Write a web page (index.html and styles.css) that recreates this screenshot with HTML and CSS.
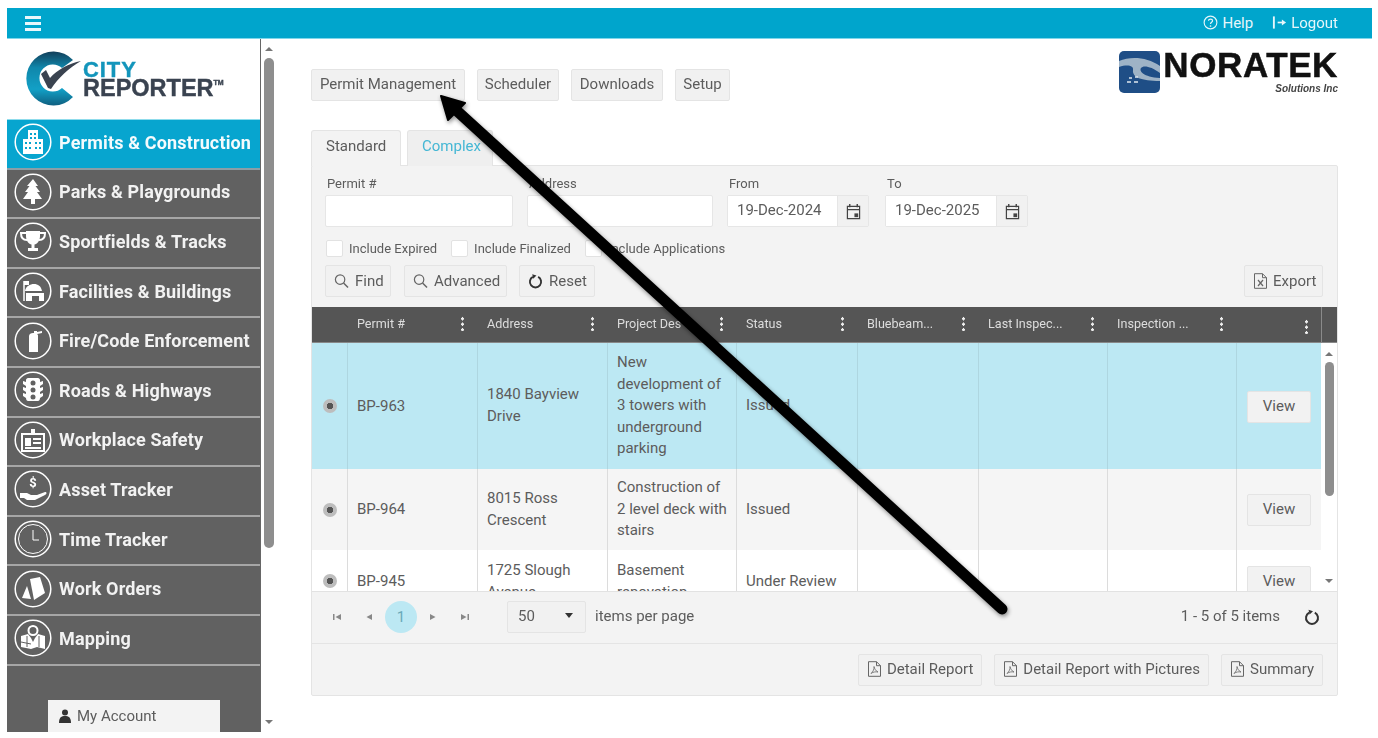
FILE: index.html
```html
<!DOCTYPE html>
<html lang="en">
<head>
<meta charset="utf-8">
<title>City Reporter - Permit Management</title>
<link rel="stylesheet" href="styles.css">
</head>
<body>
<svg class="defs" width="0" height="0" aria-hidden="true">
  <defs>
    <linearGradient id="g-c" x1="0" y1="0" x2="0" y2="1"><stop offset="0" stop-color="#123f5a"/><stop offset=".3" stop-color="#1087ab"/><stop offset=".7" stop-color="#12a0c6"/><stop offset="1" stop-color="#0f5f80"/></linearGradient>
  </defs>
  <symbol id="i-search" viewBox="0 0 16 16"><circle cx="6.500" cy="6.500" r="5" fill="none" stroke="currentColor" stroke-width="1.300"/><path d="M10.200 10.200 15 15" stroke="currentColor" stroke-width="1.600" fill="none"/></symbol>
  <symbol id="i-refresh" viewBox="0 0 16 16"><path d="M5.200 3.600A6 6 0 1 0 10.800 3.600" fill="none" stroke="currentColor" stroke-width="2"/><path d="M4.500 .8 9 2.200 5.600 5.600Z" fill="currentColor"/></symbol>
  <symbol id="i-cal" viewBox="0 0 16 18"><path d="M1.500 3.500h13v13h-13zM1.500 7h13" fill="none" stroke="currentColor" stroke-width="1.300"/><path d="M4 1v3.500M12 1v3.500" stroke="currentColor" stroke-width="1.500"/><rect x="9" y="11" width="4" height="4" fill="currentColor"/></symbol>
  <symbol id="i-pdf" viewBox="0 0 14 16"><path d="M1 .7h8l4 4v10.600H1zM9 .7v4h4" fill="none" stroke="currentColor" stroke-width="1"/><path d="M3.500 12.500C5.500 11 7 7.500 6.500 5.500 7 8 8.500 10 10.500 11 8 10.500 5.500 11 3.500 12.500Z" fill="none" stroke="currentColor" stroke-width=".8"/></symbol>
  <symbol id="i-xls" viewBox="0 0 14 16"><path d="M1 .7h8l4 4v10.600H1zM9 .7v4h4" fill="none" stroke="currentColor" stroke-width="1"/><path d="M4.500 7 9.500 13M9.500 7 4.500 13" stroke="currentColor" stroke-width="1.200"/></symbol>
  <symbol id="i-ring" viewBox="0 0 38 38"><circle cx="19" cy="19" r="17.800" fill="none" stroke="#fff" stroke-width="1.500"/></symbol>
</svg>

<div class="app">
  <header class="topbar">
    <div class="burger"><span></span><span></span><span></span></div>
    <nav class="top-links">
      <a class="top-link"><svg class="top-ic" viewBox="0 0 16 16"><circle cx="8" cy="8" r="6.800" fill="none" stroke="currentColor" stroke-width="1.200"/><path d="M5.800 6.200C6 3.800 10.200 3.800 10.200 6.200 10.200 7.800 8 7.800 8 9.600" fill="none" stroke="currentColor" stroke-width="1.300"/><circle cx="8" cy="11.700" r=".9" fill="currentColor"/></svg>Help</a>
      <a class="top-link"><svg class="top-ic" viewBox="0 0 16 16"><path d="M2 1.500v13" stroke="currentColor" stroke-width="2"/><path d="M6 8h6" stroke="currentColor" stroke-width="1.800"/><path d="M10.500 4.800 15 8l-4.500 3.200Z" fill="currentColor"/></svg>Logout</a>
    </nav>
  </header>

  <div class="main">
    <aside class="sidebar">
      <div class="brand">
        <svg class="brand-mark" viewBox="0 0 60 56">
          <path d="M50 9A27 27 0 1 0 50 46L39 37A13.500 13.500 0 1 1 39 17Z" fill="url(#g-c)"/>
          <path d="M18 23 23 19 27 27C34 19 46 12 58 10 46 17 35 27 28 38L25 37Z" fill="#3a4350"/>
        </svg>
        <div class="brand-text">
          <span class="brand-city">CITY</span>
          <span class="brand-rep">REPORTER<sup class="tm">TM</sup></span>
        </div>
      </div>
      <ul class="menu">
        <li class="menu-item is-active"><svg class="ic"><use href="#i-ring"/><path d="M14 7h10v9h5v15H9V16h5Z" fill="#fff"/><path d="M11 19h2v2h-2zM15 19h2v2h-2zM21 19h2v2h-2zM25 19h2v2h-2zM11 24h2v2h-2zM15 24h2v2h-2zM21 24h2v2h-2zM25 24h2v2h-2zM16 10h2v2h-2zM20 10h2v2h-2zM16 14h2v2h-2zM20 14h2v2h-2z" fill="#07a5cf"/></svg>Permits &amp; Construction</li>
        <li class="menu-item"><svg class="ic"><use href="#i-ring"/><path d="M19 6l5 7h-2.500l4.500 6h-3l5 7H21v5h-4v-5H9l5-7h-3l4.500-6H13Z" fill="#fff"/></svg>Parks &amp; Playgrounds</li>
        <li class="menu-item"><svg class="ic"><use href="#i-ring"/><path d="M12 9h14v5c0 5-3 8-5.500 8.500V26H24v3H14v-3h3.500v-3.500C15 22 12 19 12 14Z" fill="#fff"/><path d="M12 11H7c0 5 2 7 6 7M26 11h5c0 5-2 7-6 7" fill="none" stroke="#fff" stroke-width="2"/></svg>Sportfields &amp; Tracks</li>
        <li class="menu-item"><svg class="ic"><use href="#i-ring"/><path d="M10 9V29" stroke="#fff" stroke-width="1.500"/><path d="M10 9h5v4h-5zM11 19c1-5 5-7 9-7s7 2 8 7ZM12 21h18v8h-5v-5h-7v5h-6Z" fill="#fff"/></svg>Facilities &amp; Buildings</li>
        <li class="menu-item"><svg class="ic"><use href="#i-ring"/><path d="M15 14c0-2 2-3 4-3h1v-2h3v1l5-1v2l-5 1c1 1 1 1 1 2v16h-9Z" fill="#fff"/></svg>Fire/Code Enforcement</li>
        <li class="menu-item"><svg class="ic"><use href="#i-ring"/><path d="M14 7h10c1 0 2 1 2 2v2l3-1v3l-3 2v2l3-1v3l-3 2v2l3-1v3l-3 2c0 2-1 3-2 3H14c-1 0-2-1-2-3l-3-2v-3l3 1v-2l-3-2v-3l3 1v-2l-3-2v-3l3 1V9c0-1 1-2 2-2Z" fill="#fff"/><circle cx="19" cy="12" r="2.500" fill="#616161"/><circle cx="19" cy="19" r="2.500" fill="#616161"/><circle cx="19" cy="26" r="2.500" fill="#616161"/></svg>Roads &amp; Highways</li>
        <li class="menu-item"><svg class="ic"><use href="#i-ring"/><path d="M8 13h22v17H8z" fill="none" stroke="#fff" stroke-width="2"/><path d="M17 8h4v6h-4zM11 17h6v8h-6zM19 17h8v2h-8zM19 21h8v2h-8zM11 26h16v2H11z" fill="#fff"/></svg>Workplace Safety</li>
        <li class="menu-item"><svg class="ic"><use href="#i-ring"/><text class="ic-dollar" x="19" y="17" text-anchor="middle">$</text><path d="M6 23h7l4 2h6l8-3c2 0 2 2 0 3l-10 5H13l-3-2H6Z" fill="#fff"/></svg>Asset Tracker</li>
        <li class="menu-item"><svg class="ic"><use href="#i-ring"/><circle cx="19" cy="19" r="14.500" fill="none" stroke="#fff" stroke-width="1"/><path d="M19 10v10h6" fill="none" stroke="#fff" stroke-width="1"/></svg>Time Tracker</li>
        <li class="menu-item"><svg class="ic"><use href="#i-ring"/><path d="M16 9 26 7l5 16-11 7Z" fill="#fff"/><path d="M13 16 8 28l9 1Z" fill="#fff"/></svg>Work Orders</li>
        <li class="menu-item"><svg class="ic"><use href="#i-ring"/><path d="M7 17l7-2 3 4 2 4 2-4 3-4 7 2v13l-8-2-6 2-10-2Z" fill="#fff"/><circle cx="19" cy="11.500" r="4.500" fill="none" stroke="#fff" stroke-width="2"/><path d="M13 17v11M25 17v11M7 23l10 2" stroke="#616161" stroke-width="1"/></svg>Mapping</li>
      </ul>
      <div class="account-wrap">
        <button class="account"><svg class="acc-ic" viewBox="0 0 14 14"><circle cx="7" cy="3.500" r="3" fill="currentColor"/><path d="M1 14c0-6 2.500-7 6-7s6 1 6 7Z" fill="currentColor"/></svg>My Account</button>
      </div>
    </aside>
    <div class="side-scroll"><span class="arrow-up"></span><span class="side-thumb"></span><span class="arrow-down"></span></div>

    <main class="content">
      <div class="toolbar">
        <div class="modules">
          <button class="btn m-permit">Permit Management</button>
          <button class="btn m-sched">Scheduler</button>
          <button class="btn m-down">Downloads</button>
          <button class="btn m-setup">Setup</button>
        </div>
        <div class="noratek">
          <svg class="nor-mark" viewBox="0 0 41 42"><rect width="41" height="42" rx="5" fill="#1f4e86"/><path d="M0 10C12 5 28 6 41 15V22C32 15 24 14 22 17 20 20 24 26 41 27V30C22 30 13 26 14 19 15 15 9 13 0 16Z" fill="#9eb3c6"/><path d="M10 27h3M16 26h3M8 31h4M15 31h4" stroke="#dfe7ee" stroke-width="1.500"/></svg>
          <div class="nor-text"><span class="nor-name">NORATEK</span><span class="nor-sub">Solutions Inc</span></div>
        </div>
      </div>

      <div class="tabs">
        <div class="tab is-current">Standard</div>
        <div class="tab tab-alt">Complex</div>
      </div>

      <section class="panel">
        <div class="filters">
          <div class="fields">
            <label class="field f-permit"><span class="lbl">Permit #</span><span class="inp"></span></label>
            <label class="field f-addr"><span class="lbl">Address</span><span class="inp"></span></label>
            <div class="field f-from"><span class="lbl">From</span><div class="date"><span class="date-val">19-Dec-2024</span><span class="date-btn"><svg class="cal"><use href="#i-cal"/></svg></span></div></div>
            <div class="field f-to"><span class="lbl">To</span><div class="date"><span class="date-val">19-Dec-2025</span><span class="date-btn"><svg class="cal"><use href="#i-cal"/></svg></span></div></div>
          </div>
          <div class="checks">
            <span class="check"><span class="box"></span>Include Expired</span>
            <span class="check"><span class="box"></span>Include Finalized</span>
            <span class="check"><span class="box"></span>Include Applications</span>
          </div>
          <div class="actions">
            <button class="btn btn-find"><svg class="b-ic"><use href="#i-search"/></svg>Find</button>
            <button class="btn btn-adv"><svg class="b-ic"><use href="#i-search"/></svg>Advanced</button>
            <button class="btn btn-reset"><svg class="b-ic dark"><use href="#i-refresh"/></svg>Reset</button>
            <button class="btn btn-export"><svg class="b-ic"><use href="#i-xls"/></svg>Export</button>
          </div>
        </div>

        <div class="grid-head">
          <div class="hc c-radio"></div>
          <div class="hc c-permit"><span>Permit #</span><i class="kebab"></i></div>
          <div class="hc c-addr"><span>Address</span><i class="kebab"></i></div>
          <div class="hc c-desc"><span>Project Des</span><i class="kebab"></i></div>
          <div class="hc c-status"><span>Status</span><i class="kebab"></i></div>
          <div class="hc c-blue"><span>Bluebeam...</span><i class="kebab"></i></div>
          <div class="hc c-last"><span>Last Inspec...</span><i class="kebab"></i></div>
          <div class="hc c-insp"><span>Inspection ...</span><i class="kebab"></i></div>
          <div class="hc c-view"><i class="kebab kebab-low"></i></div>
          <div class="hc c-gutter"></div>
        </div>

        <div class="grid-wrap">
          <div class="grid-body">
            <div class="row row-sel">
              <div class="c c-radio"><span class="radio"></span></div>
              <div class="c c-permit">BP-963</div>
              <div class="c c-addr">1840 Bayview Drive</div>
              <div class="c c-desc">New development of 3 towers with underground parking</div>
              <div class="c c-status">Issued</div>
              <div class="c c-blue"></div><div class="c c-last"></div><div class="c c-insp"></div>
              <div class="c c-view"><button class="btn btn-view">View</button></div>
            </div>
            <div class="row row-alt">
              <div class="c c-radio"><span class="radio"></span></div>
              <div class="c c-permit">BP-964</div>
              <div class="c c-addr">8015 Ross Crescent</div>
              <div class="c c-desc">Construction of 2 level deck with stairs</div>
              <div class="c c-status">Issued</div>
              <div class="c c-blue"></div><div class="c c-last"></div><div class="c c-insp"></div>
              <div class="c c-view"><button class="btn btn-view">View</button></div>
            </div>
            <div class="row row-last">
              <div class="c c-radio"><span class="radio"></span></div>
              <div class="c c-permit">BP-945</div>
              <div class="c c-addr">1725 Slough Avenue</div>
              <div class="c c-desc">Basement renovation</div>
              <div class="c c-status">Under Review</div>
              <div class="c c-blue"></div><div class="c c-last"></div><div class="c c-insp"></div>
              <div class="c c-view"><button class="btn btn-view">View</button></div>
            </div>
          </div>
          <div class="grid-scroll"><span class="arrow-up"></span><span class="grid-thumb"></span><span class="arrow-down"></span></div>
        </div>

        <div class="pager">
          <span class="pg"><svg class="pg-ic" viewBox="0 0 10 10"><path d="M1 2h1.500v6H1zM9 2v6L3.500 5Z"/></svg></span>
          <span class="pg"><svg class="pg-ic" viewBox="0 0 10 10"><path d="M8 2v6L2.500 5Z"/></svg></span>
          <span class="pg pg-on">1</span>
          <span class="pg"><svg class="pg-ic" viewBox="0 0 10 10"><path d="M2 2v6L7.500 5Z"/></svg></span>
          <span class="pg"><svg class="pg-ic" viewBox="0 0 10 10"><path d="M1 2v6L6.500 5ZM7.500 2H9v6H7.500Z"/></svg></span>
          <span class="per"><span>50</span><span class="caret"></span></span>
          <span class="per-text">items per page</span>
          <span class="count">1 - 5 of 5 items</span>
          <svg class="pg-refresh"><use href="#i-refresh"/></svg>
        </div>

        <div class="reports">
          <button class="btn"><svg class="b-ic"><use href="#i-pdf"/></svg>Detail Report</button>
          <button class="btn"><svg class="b-ic"><use href="#i-pdf"/></svg>Detail Report with Pictures</button>
          <button class="btn"><svg class="b-ic"><use href="#i-pdf"/></svg>Summary</button>
        </div>
      </section>
    </main>
  </div>
</div>

<svg class="annotation" viewBox="0 0 1378 738" aria-hidden="true">
  <path d="M456 110 1002 609" stroke="#000" stroke-width="11" stroke-linecap="round" fill="none"/>
  <path d="M441 96 465 103 448 120Z" fill="#000" stroke="#000" stroke-width="2" stroke-linejoin="round"/>
</svg>
</body>
</html>
```
FILE: styles.css
```css
* { box-sizing: border-box; }
html, body { margin: 0; height: 738px; overflow: hidden; background: #fff; }
body { font-family: Roboto, "Liberation Sans", sans-serif; color: #5c5c5c; font-size: 14px; position: relative; }
.defs { position: absolute; }
button { font: inherit; color: inherit; }

.app { margin: 8px 6px 0 7px; height: 724px; display: flex; flex-direction: column; filter: blur(.35px); }

.topbar { height: 31px; flex: none; background: #00a5cc; border-bottom: 1px solid #7fd6ea; display: flex; align-items: center; justify-content: space-between; padding: 0 34px 0 18px; color: #fff; }
.burger { display: flex; flex-direction: column; gap: 3px; width: 16px; }
.burger span { height: 3px; background: #e8f7fb; }
.top-links { display: flex; gap: 19px; margin-top: -1px; }
.top-link { display: flex; align-items: center; gap: 4px; font-size: 15px; color: #e6f6fa; }
.top-ic { width: 15px; height: 15px; }

.main { flex: 1; display: flex; min-height: 0; }

.sidebar { width: 254px; flex: none; background: #616161; border-right: 1px solid #666; display: flex; flex-direction: column; overflow: hidden; }
.brand { height: 81px; flex: none; background: #fff; display: flex; align-items: flex-start; padding: 12px 0 0 16px; border-bottom: 1px solid #8fdcec; }
.brand-mark { width: 60px; height: 56px; flex: none; }
.brand-text { display: flex; flex-direction: column; margin: 9px 0 0 0; font-family: "Liberation Sans", sans-serif; font-weight: 700; -webkit-text-stroke: .4px; }
.brand-city { font-size: 22px; line-height: 19px; letter-spacing: .9px; color: #1395bb; }
.brand-rep { font-size: 23.500px; line-height: 19px; color: #3a4350; white-space: nowrap; }
.tm { font-size: 7px; vertical-align: 11px; line-height: 0; }

.menu { list-style: none; margin: 0; padding: 0; }
.menu-item { height: 49.600px; display: flex; align-items: center; gap: 7px; padding: 0 0 3px 7px; border-bottom: 2px solid #a6a6a6; color: #f2f2f2; font-weight: 700; font-size: 18px; letter-spacing: .15px; white-space: nowrap; }
.menu-item.is-active { background: #07a5cf; color: #f4fbfd; border-bottom-color: #8a9ea6; }
.ic { width: 38px; height: 38px; flex: none; }
.ic-dollar { font: 700 13px Roboto, sans-serif; fill: #fff; }

.account-wrap { padding: 34px 0 0 41px; }
.account { width: 172px; height: 36px; border: 0; background: #f3f3f3; display: flex; align-items: flex-start; gap: 5px; padding: 7px 0 0 10px; font-size: 15px; cursor: default; }
.acc-ic { width: 14px; height: 14px; margin-top: 2px; color: #333; }

.side-scroll { width: 15px; flex: none; position: relative; display: flex; flex-direction: column; align-items: center; background: #fff; padding-top: 8px; }
.side-thumb { width: 10px; height: 490px; margin-top: 7px; border-radius: 5px; background: #8e8e8e; }
.arrow-up, .arrow-down { width: 0; height: 0; border-left: 4px solid transparent; border-right: 4px solid transparent; flex: none; }
.arrow-up { border-bottom: 4px solid #777; }
.arrow-down { border-top: 4px solid #777; margin-top: auto; }
.side-scroll .arrow-down { margin-bottom: 8px; }

.content { flex: 1; min-width: 0; padding: 12px 34px 0 35px; }
.toolbar { display: flex; justify-content: space-between; align-items: flex-start; }
.modules { display: flex; gap: 12px; margin-top: 18px; }
.btn { height: 32px; padding: 0 8px; background: #f1f1f1; border: 1px solid #e4e4e4; border-radius: 2px; font-size: 15px; display: inline-flex; align-items: center; gap: 5px; white-space: nowrap; cursor: default; color: #5c5c5c; }
.modules .btn, .reports .btn { padding-bottom: 2px; }
.modules .btn { padding-left: 0; padding-right: 0; justify-content: center; }
.m-permit { width: 154px; } .m-sched { width: 82px; } .m-down { width: 92px; } .m-setup { width: 55px; }
.noratek { display: flex; }
.nor-mark { width: 41px; height: 42px; flex: none; }
.nor-text { display: flex; flex-direction: column; align-items: flex-end; margin-left: 3px; font-family: "Liberation Sans", sans-serif; color: #111; }
.nor-name { font-weight: 700; font-size: 35px; line-height: 28px; letter-spacing: .6px; -webkit-text-stroke: .5px; }
.nor-sub { font-size: 10px; font-weight: 700; font-style: italic; line-height: 12px; margin-top: 4px; color: #444; }

.tabs { display: flex; gap: 6px; margin-top: 29px; align-items: flex-end; position: relative; z-index: 1; margin-bottom: -1px; }
.tab { height: 36px; padding: 6px 14px 0; font-size: 15px; border: 1px solid #e4e4e4; border-bottom: 0; border-radius: 3px 3px 0 0; background: #efefef; }
.tab.is-current { width: 90px; background: #f3f3f3; }
.tab-alt { width: 86px; color: #45b7d4; }

.panel { background: #f3f3f3; border: 1px solid #e4e4e4; border-radius: 2px; height: 531px; }
.filters { padding: 9px 14px 0 13px; height: 141px; }
.fields { display: flex; gap: 14px; }
.field { display: flex; flex-direction: column; }
.f-permit { width: 188px; } .f-addr { width: 186px; } .f-from { width: 142px; } .f-to { width: 143px; margin-left: 2px; }
.lbl { font-size: 13px; height: 20px; padding: 0 0 0 2px; line-height: 17px; }
.inp { height: 32px; background: #fff; border: 1px solid #e6e6e6; border-radius: 2px; }
.date { height: 32px; display: flex; border: 1px solid #e6e6e6; border-radius: 2px; }
.date-val { flex: 1; background: #fff; font-size: 15px; line-height: 28px; padding-left: 9px; }
.date-btn { width: 31px; display: flex; align-items: center; justify-content: center; background: #f1f1f1; border-left: 1px solid #e6e6e6; }
.cal { width: 15px; height: 17px; color: #444; }

.checks { display: flex; margin-top: 13px; height: 17px; padding-left: 1px; font-size: 13px; }
.check { display: flex; align-items: center; gap: 6px; margin-right: 14px; }
.box { width: 17px; height: 17px; background: #fff; border: 1px solid #e2e2e2; border-radius: 2px; }
.actions { display: flex; gap: 12px; margin-top: 8px; }
.actions .btn { gap: 6px; }
.actions .btn-export { gap: 5px; padding: 0 6px 0 8px; }
.b-ic { width: 15px; height: 16px; color: #666; flex: none; }
.b-ic.dark { color: #333; }
.btn-find { width: 66px; } .btn-adv { width: 103px; margin-left: 1px; } .btn-reset { width: 76px; } .btn-export { width: 79px; margin-left: auto; }

.grid-head { display: flex; height: 36px; background: #555; color: #ddd; font-size: 12.600px; border-bottom: 1px solid #888; }
.hc { display: flex; align-items: center; justify-content: space-between; padding: 0 14px 2px 9px; flex: none; }
.hc.c-view { justify-content: flex-end; padding-right: 13px; padding-top: 6px; }
.c-radio { width: 36px; } .c-permit { width: 130px; } .c-addr { width: 130px; } .c-desc { width: 129px; }
.c-status { width: 121px; } .c-blue { width: 121px; } .c-last { width: 129px; } .c-insp { width: 129px; }
.c-view { width: 84px; }
.c-gutter { width: 16px; border-left: 1px solid #8a8a8a; padding: 0; }
.kebab { width: 3px; height: 15px; flex: none; background: radial-gradient(circle, #eee 1.500px, transparent 1.700px) 0 0 / 3px 5.500px repeat-y; }

.grid-wrap { display: flex; height: 249px; background: #fff; border-bottom: 1px solid #e2e2e2; overflow: hidden; }
.grid-body { width: 1009px; flex: none; overflow: hidden; }
.row { display: flex; }
.row-sel { height: 126px; background: #bce8f3; }
.row-alt { height: 81px; background: #f5f5f5; }
.row-last { height: 90px; background: #fff; }
.c { display: flex; align-items: center; flex: none; padding: 0 7px 0 9px; font-size: 15px; line-height: 21.600px; border-right: 1px solid #dcdcdc; }
.row-sel .c { border-right-color: #aed6e0; }
.row-sel .c-permit, .row-sel .c-view.c { padding-top: 2px; }
.row-last .c-addr, .row-last .c-desc { align-items: flex-start; padding-top: 10px; }
.row-last .c-permit, .row-last .c-status { align-items: flex-start; padding-top: 21px; }
.c-radio.c { padding: 0; justify-content: center; }
.row-last .c-radio.c { align-items: flex-start; padding-top: 24px; }
.c-view.c { border-right: 0; padding: 0; justify-content: center; }
.row-last .c-view.c { align-items: flex-start; padding-top: 16px; }
.radio { width: 14px; height: 14px; border-radius: 50%; background: radial-gradient(circle, #555 3px, #bdbdbd 3.500px); }
.btn-view { width: 64px; justify-content: center; padding: 0; background: #f2f2f2; }

.grid-scroll { flex: 1; display: flex; flex-direction: column; align-items: center; padding: 9px 0 8px; }
.grid-thumb { width: 9px; height: 134px; margin-top: 6px; border-radius: 5px; background: #8e8e8e; }

.pager { height: 52px; display: flex; align-items: center; padding: 0 17px 2px 9px; border-bottom: 1px solid #e4e4e4; }
.pg { width: 32px; height: 32px; display: flex; align-items: center; justify-content: center; border-radius: 50%; }
.pg-on { background: #bce8f3; color: #6aa9b8; font-size: 15px; }
.pg-ic { width: 10px; height: 10px; fill: #888; }
.per { width: 79px; height: 32px; margin-left: 26px; padding: 0 12px 2px 10px; background: #f1f1f1; border: 1px solid #e4e4e4; border-radius: 2px; display: flex; align-items: center; justify-content: space-between; font-size: 15px; }
.caret { width: 0; height: 0; border-left: 4px solid transparent; border-right: 4px solid transparent; border-top: 5px solid #333; }
.per-text { margin: -2px 0 0 9px; font-size: 15px; }
.count { margin: -2px 0 0 auto; font-size: 15px; }
.pg-refresh { width: 16px; height: 16px; margin-left: 24px; color: #333; }

.reports { display: flex; justify-content: flex-end; gap: 12px; padding: 10px 14px 0 0; }

.annotation { position: absolute; left: 0; top: 0; width: 1378px; height: 738px; pointer-events: none; filter: drop-shadow(1px 2px 2px rgba(0,0,0,.45)); }
```
